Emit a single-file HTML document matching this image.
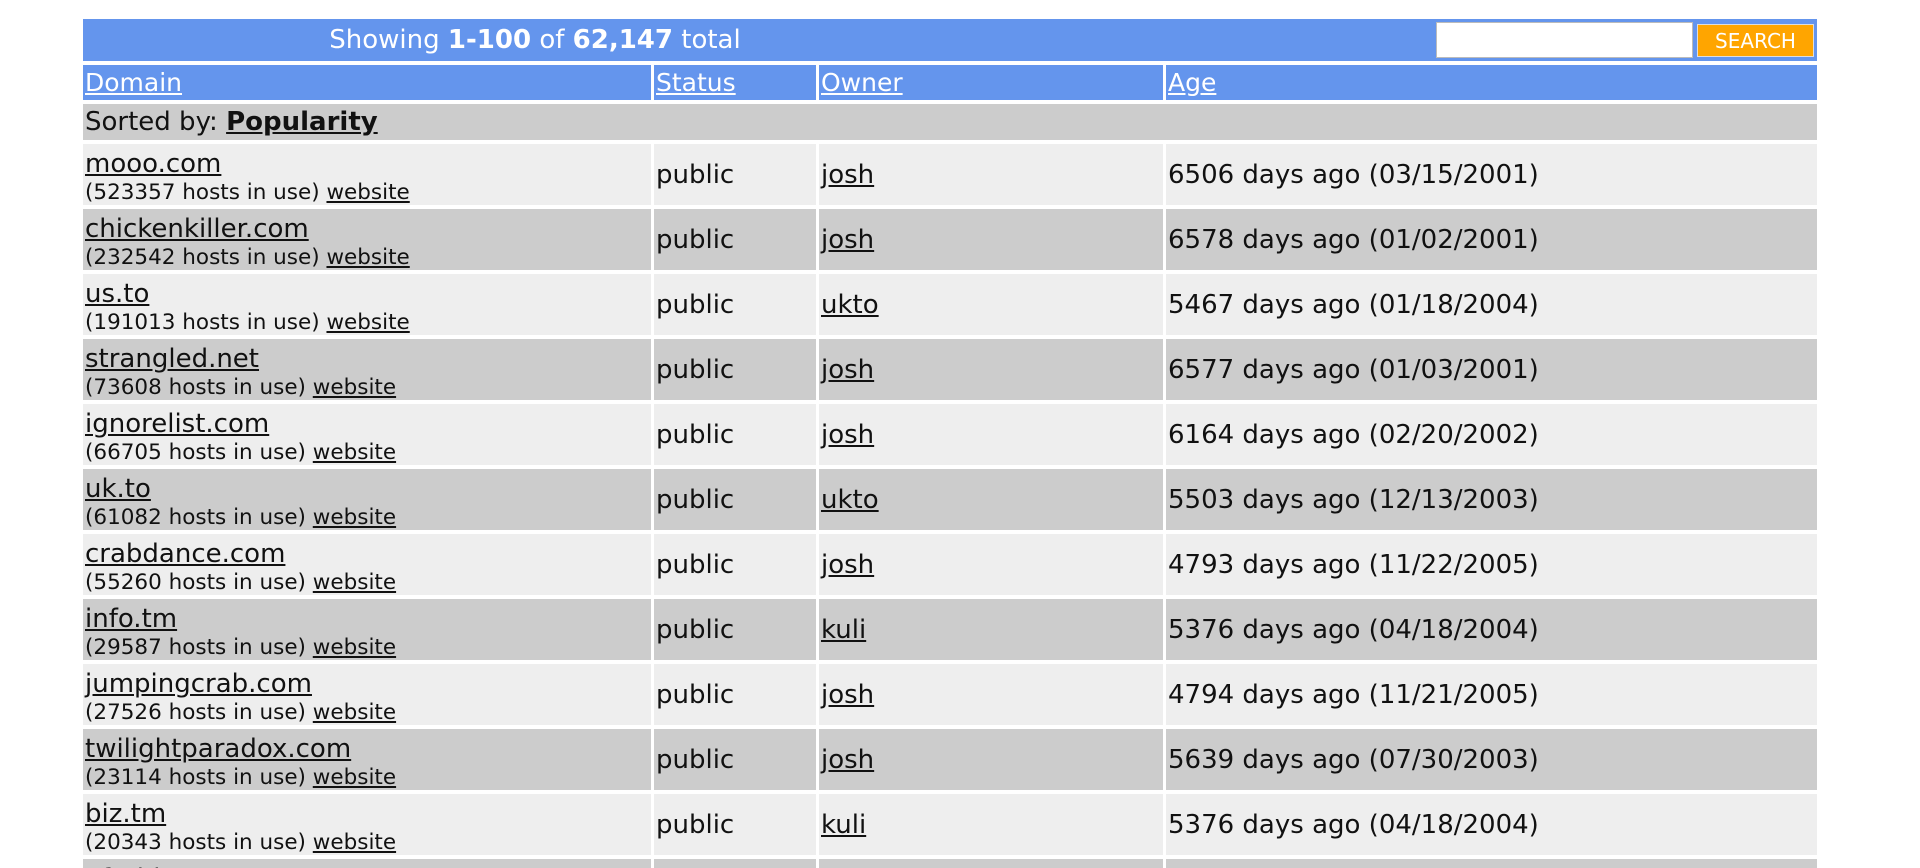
<!DOCTYPE html>
<html><head><meta charset="utf-8"><style>
html,body{margin:0;padding:0;background:#fff;width:1920px;height:868px;overflow:hidden;position:relative}
body{font-family:"DejaVu Sans","Liberation Sans",sans-serif;font-size:26px;color:#111}
a{color:#111;text-decoration:underline}
.c{position:absolute;white-space:nowrap;overflow:hidden;box-sizing:border-box;padding-left:2px}
.title{position:absolute;left:83px;top:19px;width:1734px;height:42px;background:#6495ed;color:#fff}
.title .t{position:absolute;left:0;width:904px;text-align:center;top:0;line-height:42px;font-size:26px}
.search{position:absolute;left:1353px;top:3px;width:257px;height:36px;background:#fff;border:1px solid #bbb;box-sizing:border-box}
.btn{position:absolute;left:1614px;top:5px;width:117px;height:33px;background:#ffa500;color:#fff;font-size:20px;line-height:33px;text-align:center;font-family:"DejaVu Sans",sans-serif;border:1px solid #ddd;box-sizing:border-box}
.hd{background:#6495ed;top:65px;height:35px;line-height:35px;font-size:25px}
.hd a{color:#fff}
.sb{background:#ccc;left:83px;width:1734px;top:104px;height:36px;line-height:37px}
.l{background:#eee}.d{background:#ccc}
.one{line-height:62px;height:61px}
.two{height:61px}
.two .a{position:absolute;left:2px;top:4px;line-height:32px}
.two .b{position:absolute;left:2px;top:36px;line-height:26px;font-size:21.5px}
</style></head><body>
<div class="title"><div class="t">Showing <b>1-100</b> of <b>62,147</b> total</div><div class="search"></div><div class="btn">SEARCH</div></div>
<div class="c hd" style="left:83px;width:568px"><a href="#">Domain</a></div>
<div class="c hd" style="left:654px;width:162px"><a href="#">Status</a></div>
<div class="c hd" style="left:819px;width:344px"><a href="#">Owner</a></div>
<div class="c hd" style="left:1166px;width:651px"><a href="#">Age</a></div>
<div class="c sb">Sorted by: <a href="#"><b>Popularity</b></a></div>
<div id="rows"></div>
<script>
var d=[["mooo.com",523357,"josh","6506 days ago (03/15/2001)"],["chickenkiller.com",232542,"josh","6578 days ago (01/02/2001)"],["us.to",191013,"ukto","5467 days ago (01/18/2004)"],["strangled.net",73608,"josh","6577 days ago (01/03/2001)"],["ignorelist.com",66705,"josh","6164 days ago (02/20/2002)"],["uk.to",61082,"ukto","5503 days ago (12/13/2003)"],["crabdance.com",55260,"josh","4793 days ago (11/22/2005)"],["info.tm",29587,"kuli","5376 days ago (04/18/2004)"],["jumpingcrab.com",27526,"josh","4794 days ago (11/21/2005)"],["twilightparadox.com",23114,"josh","5639 days ago (07/30/2003)"],["biz.tm",20343,"kuli","5376 days ago (04/18/2004)"],["afraid.org",19000,"josh","6600 days ago (12/10/2000)"]];
var h="";
d.forEach(function(r,i){var t=144+65*i,cl=i%2?"d":"l";
h+='<div class="c two '+cl+'" style="left:83px;width:568px;top:'+t+'px"><span class="a"><a href="#">'+r[0]+'</a></span><span class="b">('+r[1]+' hosts in use) <a href="#">website</a></span></div>';
h+='<div class="c one '+cl+'" style="left:654px;width:162px;top:'+t+'px">public</div>';
h+='<div class="c one '+cl+'" style="left:819px;width:344px;top:'+t+'px"><a href="#">'+r[2]+'</a></div>';
h+='<div class="c one '+cl+'" style="left:1166px;width:651px;top:'+t+'px">'+r[3]+'</div>';});
document.getElementById("rows").innerHTML=h;
</script>
</body></html>
